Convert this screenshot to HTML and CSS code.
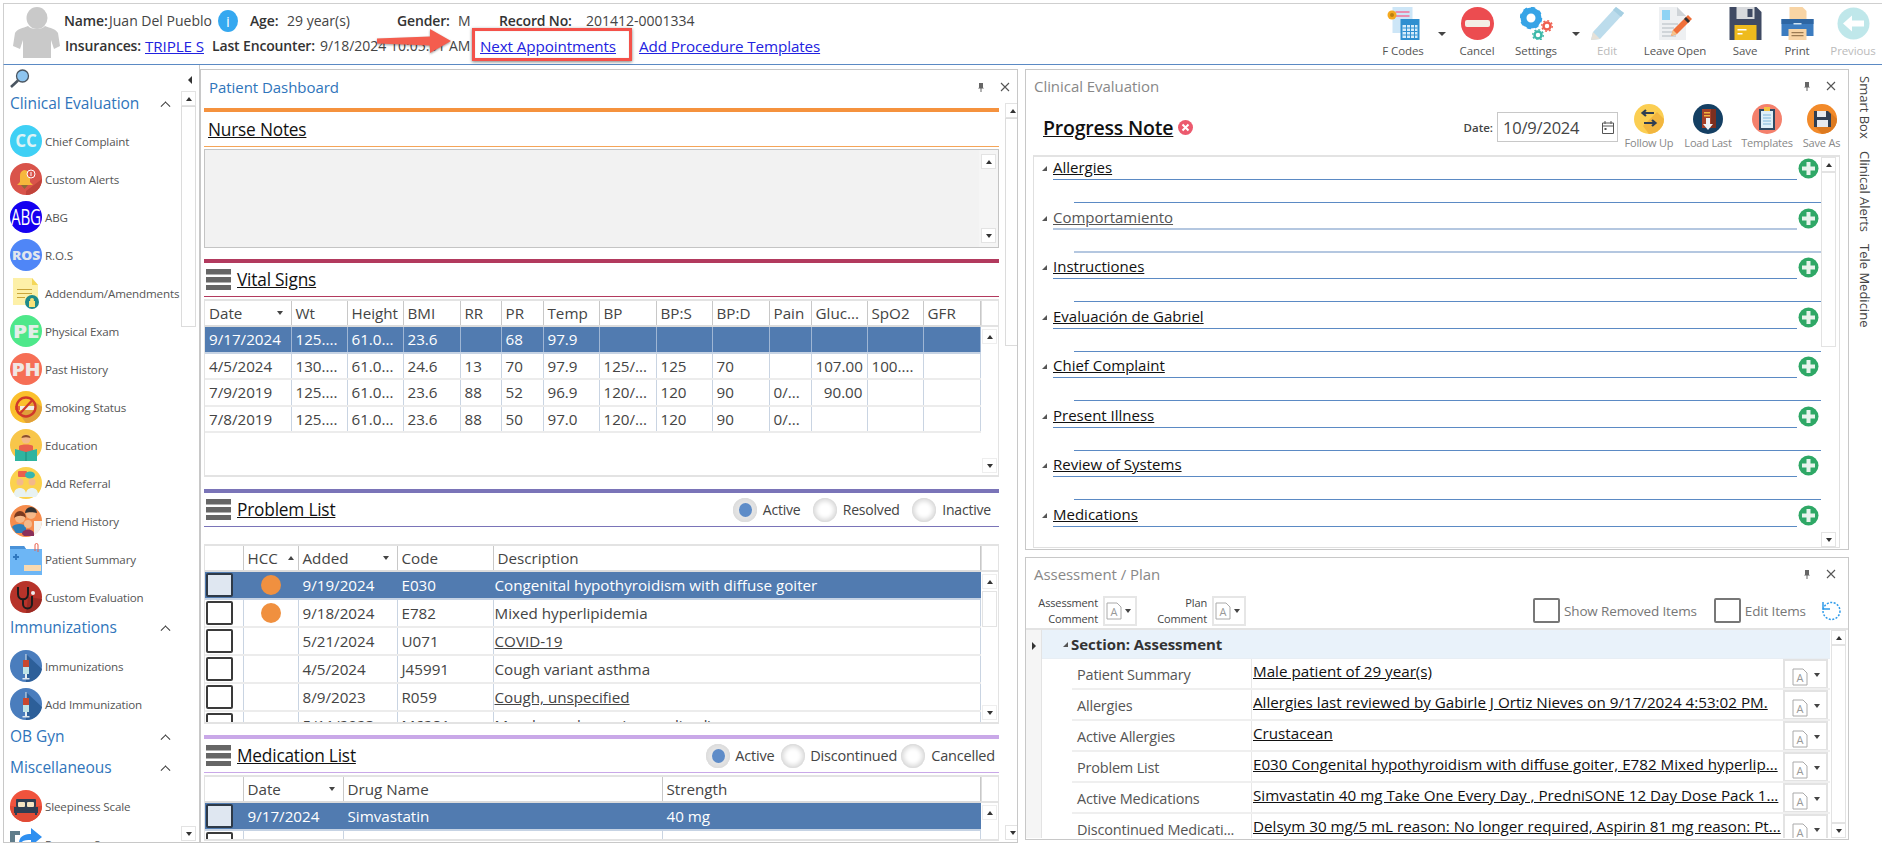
FILE: index.html
```html
<!DOCTYPE html>
<html lang="en">
<head>
<meta charset="utf-8">
<title>Patient Dashboard</title>
<link rel="stylesheet" href="styles.css">
</head>
<body>
<svg class="defs" aria-hidden="true">
  <symbol id="i-pin" viewBox="0 0 10 10"><path d="M3 1h4v4.500l1 1H5.500V10h-1V6.500H2l1-1z" fill="#666"/></symbol>
  <symbol id="i-x" viewBox="0 0 10 10"><path d="M1 1l8 8M9 1l-8 8" stroke="#555" stroke-width="1.100" fill="none"/></symbol>
  <symbol id="i-menu" viewBox="0 0 25 21"><path d="M0 0h25v5.500H0zM0 8h25v5.500H0zM0 16h25v5H0z" fill="#666"/></symbol>
  <symbol id="i-plus" viewBox="0 0 21 21"><circle cx="10.500" cy="10.500" r="10" fill="#2fa866"/><path d="M8.500 4h4v4.500H17v4h-4.500V17h-4v-4.500H4v-4h4.500z" fill="#e8f4ec"/></symbol>
  <symbol id="i-doca" viewBox="0 0 16 18"><path d="M1 1h10l4 4v12H1z" fill="#fff" stroke="#aaa"/><text x="8" y="14" font-size="11" text-anchor="middle" fill="#999" font-family="Liberation Serif">A</text></symbol>
  <symbol id="i-syringe" viewBox="0 0 32 32"><circle cx="16" cy="16" r="16" fill="#4a7dbd"/><path d="M16 4l16 15a16 16 0 0 1-16 13z" fill="#2d5f99"/><path d="M15.500 4h1v6h-1z" fill="#dfe7ee"/><rect x="13" y="10" width="6" height="7" fill="#c8472f"/><rect x="13" y="17" width="6" height="7" fill="#bfe3e6"/><path d="M15 24h2v4h-2z" fill="#e8eef2"/><path d="M12.500 28h7v1.500h-7z" fill="#dfe7ee"/></symbol>
</svg>

<div class="app">
  <header class="top">
    <svg class="avatar" viewBox="0 0 47 51"><ellipse cx="24" cy="11" rx="10.500" ry="11" fill="#c9c9c9"/><path d="M15 19c-5 2-11 3-13 7L0 39l7 3 3-9v18h28V33l3 9 6-3-2-13c-2-4-8-5-13-7-3 4-14 4-17 0z" fill="#c9c9c9"/></svg>
    <div class="hinfo">
      <div class="hrow hrow-1">
        <span class="hl">Name:</span><span>Juan Del Pueblo</span>
        <span class="info-wrap"><span class="info">i</span></span>
        <span class="hl">Age:</span><span>29 year(s)</span>
        <span class="hl">Gender:</span><span>M</span>
        <span class="hl">Record No:</span><span>201412-0001334</span>
      </div>
      <div class="hrow hrow-2">
        <span class="hl">Insurances:</span><a class="lnk" href="#">TRIPLE S</a>
        <span class="hl">Last Encounter:</span><span>9/18/2024 10:05:01 AM</span>
        <a class="lnk" href="#">Next Appointments</a><a class="lnk" href="#">Add Procedure Templates</a>
      </div>
    </div>
    <svg class="callout-arrow" viewBox="0 0 74 24"><path d="M0 9.500l53-2V0l21 12-21 12v-7.500l-53-2z" fill="#f45d4e"/></svg>
    <div class="callout-box"></div>

    <nav class="toolbar">
      <div class="tb tb-fcodes">
        <svg viewBox="0 0 32 33"><rect x="5" y="0" width="20" height="26" fill="#cde6f7"/><path d="M8 4h14v2H8zM8 8h14v2H8z" fill="#e88fb0"/><rect x="13" y="12" width="19" height="21" fill="#2f8fd0"/><path d="M15 18h15v13H15z" fill="#d5ecfa"/><path d="M15 21h15M15 24.500h15M15 28h15M19 18v13M23 18v13M27 18v13" stroke="#2f8fd0" stroke-width="1"/><circle cx="4.500" cy="8" r="4.500" fill="#f4a91f"/><circle cx="4.500" cy="8" r="2" fill="#b97f10"/></svg>
        <span>F Codes</span>
      </div>
      <span class="drop"></span>
      <div class="tb tb-cancel">
        <svg viewBox="0 0 33 33"><circle cx="16.500" cy="16.500" r="16.500" fill="#ec4c50"/><rect x="4" y="13" width="25" height="7" rx="2" fill="#f3efe6"/></svg>
        <span>Cancel</span>
      </div>
      <div class="tb tb-settings">
        <svg viewBox="0 0 33 33"><circle cx="11" cy="11" r="7.500" fill="none" stroke="#37a4e6" stroke-width="6"/><circle cx="11" cy="11" r="10" fill="none" stroke="#37a4e6" stroke-width="2.500" stroke-dasharray="4 3.800"/><circle cx="27" cy="19" r="3.500" fill="none" stroke="#ee5f50" stroke-width="2.500"/><circle cx="27" cy="19" r="5.300" fill="none" stroke="#ee5f50" stroke-width="1.300" stroke-dasharray="2 2.100"/><circle cx="18" cy="28" r="3.500" fill="none" stroke="#3cb8a8" stroke-width="2.500"/><circle cx="18" cy="28" r="5.300" fill="none" stroke="#3cb8a8" stroke-width="1.300" stroke-dasharray="2 2.100"/></svg>
        <span>Settings</span>
      </div>
      <span class="drop drop-2"></span>
      <div class="tb tb-edit tb-off">
        <svg viewBox="0 0 33 33"><path d="M25 0l8 6L9 32 0 33l2-8z" fill="#bcdcec"/><path d="M25 0l8 6-3 4-8-7z" fill="#a6cfe2"/><path d="M2 25l7 7-9 1z" fill="#e6e1d8"/></svg>
        <span>Edit</span>
      </div>
      <div class="tb tb-leave">
        <svg viewBox="0 0 33 33"><path d="M0 0h18l9 9v24H0z" fill="#eef0f2"/><path d="M18 0l9 9h-9z" fill="#cfd4d8"/><rect x="3" y="3" width="8" height="10" fill="#8fd3f4"/><path d="M3 17h16M3 21h12M3 25h10M3 29h14" stroke="#c6ccd1" stroke-width="1.500"/><path d="M29 8l4 4-15 15-6 2 2-6z" fill="#f0703a"/><path d="M27 10l4 4-2 2-4-4z" fill="#333"/><path d="M12 29l2-6 4 4z" fill="#f5c48c"/></svg>
        <span>Leave Open</span>
      </div>
      <div class="tb tb-save">
        <svg viewBox="0 0 32 33"><path d="M0 0h27l5 5v28H0z" fill="#3f4a63"/><path d="M7 0h18v12H7z" fill="#d8dadd"/><rect x="18" y="2" width="5" height="8" fill="#3f4a63"/><rect x="5" y="18" width="22" height="15" fill="#eebb1e"/><path d="M8 22h9v1.500H8zM8 26h5v1.500H8z" fill="#fff"/></svg>
        <span>Save</span>
      </div>
      <div class="tb tb-print">
        <svg viewBox="0 0 32 33"><path d="M8 0h13l4 4v10H8z" fill="#f8d4a4"/><path d="M0 12h32v17H0z" fill="#3c7cc0"/><path d="M0 12h32v5H0z" fill="#2e66a3"/><path d="M12 16h8v1.500h-8z" fill="#cfe4f5"/><path d="M7 22h18v11H7z" fill="#f8d4a4"/><path d="M10 25h12v1.300H10zM10 28h12v1.300H10z" fill="#9a7a52"/></svg>
        <span>Print</span>
      </div>
      <div class="tb tb-prev tb-off">
        <svg viewBox="0 0 33 33"><circle cx="16.500" cy="16.500" r="16" fill="#bfe7ea"/><path d="M6 16.500l9-8v5h12v6H15v5z" fill="#fff"/></svg>
        <span>Previous</span>
      </div>
    </nav>
  </header>

  <main class="main">
    <aside class="side">
      <svg class="search" viewBox="0 0 20 20"><circle cx="12.500" cy="7" r="6" fill="#8ec5f0" stroke="#4a5560" stroke-width="1.300"/><path d="M8 11.500L1 18" stroke="#4a5560" stroke-width="2.600"/></svg>
      <span class="tri-left"></span>
      <div class="sb sb-side"><span class="sb-btn up"></span><span class="sb-fill"></span></div>
      <span class="sb-btn down sb-side-down"></span>

      <div class="nav-h nav-first"><span>Clinical Evaluation</span><i class="chev"></i></div>
      <div class="nav-i"><svg viewBox="0 0 32 32"><circle cx="16" cy="16" r="16" fill="#3fd0f5"/><text x="16" y="22" font-size="17" font-weight="700" text-anchor="middle" fill="#dff3f5">CC</text></svg><span>Chief Complaint</span></div>
      <div class="nav-i"><svg viewBox="0 0 32 32"><circle cx="16" cy="16" r="16" fill="#d9534a"/><path d="M16 28L32 16a16 16 0 0 1-16 16z" fill="#c0433b"/><path d="M14 7a6 6 0 0 1 6 6v6l3 3H7l3-3v-6a6 6 0 0 1 4-6z" fill="#f6b73c"/><path d="M11 22h7l-3.500 4z" fill="#8a6a38"/><circle cx="21" cy="11" r="4" fill="#d9534a" stroke="#fff"/><path d="M21 9v4" stroke="#fff"/></svg><span>Custom Alerts</span></div>
      <div class="nav-i"><svg viewBox="0 0 32 32"><circle cx="16" cy="16" r="16" fill="#1400f0"/><text transform="translate(16 24) scale(1.050 1.450)" font-size="14.500" text-anchor="middle" fill="#fff">ABG</text></svg><span>ABG</span></div>
      <div class="nav-i"><svg viewBox="0 0 32 32"><circle cx="16" cy="16" r="16" fill="#4f86f7"/><text x="16" y="21" font-size="13" font-weight="800" textLength="28" lengthAdjust="spacingAndGlyphs" text-anchor="middle" fill="#e0e6ee">ROS</text></svg><span>R.O.S</span></div>
      <div class="nav-i"><svg viewBox="0 0 32 32"><path d="M3 1h19l6 7v20H3z" fill="#fdf0a8"/><path d="M22 1l6 7h-6z" fill="#f4d75a"/><path d="M7 12h15v1H7zM7 16h15v1H7zM7 20h8v1H7z" fill="#c9a53a"/><circle cx="22" cy="25" r="7" fill="#1f8a8a"/><rect x="19" y="24" width="6" height="6" fill="#f8e27a"/><circle cx="22" cy="23" r="2" fill="#f8e27a"/></svg><span>Addendum/Amendments</span></div>
      <div class="nav-i"><svg viewBox="0 0 32 32"><circle cx="16" cy="16" r="16" fill="#4ee88a"/><text x="16" y="22.500" font-size="18" font-weight="800" text-anchor="middle" textLength="26" lengthAdjust="spacingAndGlyphs" fill="#e3eee8">PE</text></svg><span>Physical Exam</span></div>
      <div class="nav-i"><svg viewBox="0 0 32 32"><circle cx="16" cy="16" r="16" fill="#f66e55"/><text x="16" y="22.500" font-size="18" font-weight="800" text-anchor="middle" textLength="29" lengthAdjust="spacingAndGlyphs" fill="#f0e6e3">PH</text></svg><span>Past History</span></div>
      <div class="nav-i"><svg viewBox="0 0 32 32"><circle cx="16" cy="16" r="16" fill="#fbc02d"/><path d="M16 32a16 16 0 0 0 16-16l-8-6-14 14z" fill="#e0a03a"/><path d="M5 15h20v4H5z" fill="#f3efe6"/><path d="M5 15h5v4H5z" fill="#e86a2f"/><circle cx="16" cy="16" r="9.500" fill="none" stroke="#d0392b" stroke-width="2.400"/><path d="M9.500 23l13-14" stroke="#d0392b" stroke-width="2.400"/></svg><span>Smoking Status</span></div>
      <div class="nav-i"><svg viewBox="0 0 32 32"><circle cx="16" cy="16" r="16" fill="#f8c64a"/><circle cx="16" cy="10" r="4.500" fill="#f4b98a"/><path d="M11.500 9c0-4 9-4 9 0-3-1-6-1-9 0z" fill="#8a4f2a"/><path d="M9 17c2-2 12-2 14 0v6H9z" fill="#e9604c"/><path d="M5 20l11 3 11-3v12H5z" fill="#2fb4a0"/><path d="M15.500 23h1v9h-1z" fill="#1f8a7a"/></svg><span>Education</span></div>
      <div class="nav-i"><svg viewBox="0 0 32 32"><circle cx="16" cy="16" r="16" fill="#fbd24e"/><rect x="8" y="4" width="9" height="6" rx="1" fill="#e9604c"/><ellipse cx="20" cy="8" rx="5" ry="3.500" fill="#35b6b0"/><circle cx="10" cy="15" r="3.500" fill="#f4b98a"/><circle cx="22" cy="15" r="3.500" fill="#f4b98a"/><path d="M4 27c0-8 12-8 12 0v3H6zM16 27c0-8 12-8 12 0l-2 3H16z" fill="#e8f2f2"/></svg><span>Add Referral</span></div>
      <div class="nav-i"><svg viewBox="0 0 32 32"><circle cx="16" cy="16" r="16" fill="#f58c4c"/><path d="M32 16a16 16 0 0 1-8 14V16z" fill="#f3f0ea"/><circle cx="10" cy="13" r="5" fill="#f4b98a"/><path d="M4 13a6 7 0 0 1 12 0c-3-3-8-3-12 0z" fill="#7a3a1f"/><path d="M2 22c2-4 13-4 14 0v6H6z" fill="#2f7fb8"/><circle cx="21" cy="9" r="5" fill="#f4b98a"/><path d="M15 8a6 6 0 0 1 12 0c-3-1-9-1-12 0z" fill="#333"/><circle cx="18" cy="19" r="4" fill="#f4b98a"/><path d="M12 29c0-6 12-6 12 0v2H14z" fill="#8a2f5a"/></svg><span>Friend History</span></div>
      <div class="nav-i"><svg viewBox="0 0 32 32"><path d="M0 3h14l2 3h16v26H0z" fill="#6db6f5"/><path d="M0 3h14l2 3H0z" fill="#4a92d8"/><path d="M5 11h2v2h2v2H7v2H5v-2H3v-2h2z" fill="#2f78c0"/><rect x="14" y="22" width="17" height="6" fill="#f8d9b0"/><path d="M25 8V2a1.500 1.500 0 0 1 3 0v7" fill="none" stroke="#e9604c"/></svg><span>Patient Summary</span></div>
      <div class="nav-i"><svg viewBox="0 0 32 32"><circle cx="16" cy="16" r="16" fill="#b7332a"/><path d="M18 16l14 2a16 16 0 0 1-16 14z" fill="#9c2a23"/><path d="M8 6v7c0 7 10 7 10 0V6M13 18v5c0 6 9 6 9 0v-8" fill="none" stroke="#1c1c1c" stroke-width="2"/><circle cx="23" cy="12" r="2" fill="#eee"/></svg><span>Custom Evaluation</span></div>

      <div class="nav-h"><span>Immunizations</span><i class="chev"></i></div>
      <div class="nav-i"><svg viewBox="0 0 32 32"><use href="#i-syringe"/></svg><span>Immunizations</span></div>
      <div class="nav-i"><svg viewBox="0 0 32 32"><use href="#i-syringe"/></svg><span>Add Immunization</span></div>

      <div class="nav-h nav-ob"><span>OB Gyn</span><i class="chev"></i></div>
      <div class="nav-h"><span>Miscellaneous</span><i class="chev"></i></div>
      <div class="nav-i"><svg viewBox="0 0 32 32"><circle cx="16" cy="16" r="16" fill="#f0533d"/><path d="M0 16h32a16 16 0 0 1-32 0z" fill="#e04a35"/><rect x="6" y="9" width="20" height="8" rx="1" fill="#2f3e52"/><rect x="8" y="12" width="7" height="5" rx="1" fill="#f3e3c2"/><rect x="17" y="12" width="7" height="5" rx="1" fill="#f3e3c2"/><rect x="4" y="17" width="24" height="6" fill="#2f3e52"/><path d="M5 23h2v2H5zM25 23h2v2h-2z" fill="#2f3e52"/></svg><span>Sleepiness Scale</span></div>
      <div class="nav-i"><svg viewBox="0 0 32 32"><path d="M0 3h10v4H5v8H0z" fill="#607d8b"/><path d="M9 14c1-7 7-8 12-8V0l11 9-11 9v-6c-5 0-9 0-12 5z" fill="#2e8ff0"/></svg><span>Progress Summary</span></div>
    </aside>

    <section class="dash">
      <div class="ptitle ptitle-active"><span>Patient Dashboard</span><span class="pbtns"><svg><use href="#i-pin"/></svg><svg><use href="#i-x"/></svg></span></div>
      <div class="sb sb-dash"><span class="sb-btn up"></span><span class="sb-fill"></span></div>
      <span class="sb-btn down sb-dash-down"></span>
      <div class="dash-body">
        <div class="sec sec-orange">
          <div class="sec-head"><h2>Nurse Notes</h2></div>
        </div>
        <div class="notes">
          <div class="sb sb-notes"><span class="sb-btn up"></span><span class="sb-space"></span><span class="sb-btn down"></span></div>
        </div>

        <div class="sec sec-red">
          <div class="sec-head"><svg class="menu"><use href="#i-menu"/></svg><h2>Vital Signs</h2></div>
        </div>
        <div class="grid grid-vitals">
          <table class="tbl t-vitals">
            <colgroup><col class="c86"><col class="c56"><col class="c56"><col class="c57"><col class="c41"><col class="c42"><col class="c56"><col class="c57"><col class="c56"><col class="c57"><col class="c42"><col class="c56"><col class="c56"><col class="c57"></colgroup>
            <thead><tr><th>Date<i class="sort"></i></th><th>Wt</th><th>Height</th><th>BMI</th><th>RR</th><th>PR</th><th>Temp</th><th>BP</th><th>BP:S</th><th>BP:D</th><th>Pain</th><th>Gluc...</th><th>SpO2</th><th>GFR</th></tr></thead>
            <tbody>
              <tr class="sel"><td>9/17/2024</td><td>125....</td><td>61.0...</td><td>23.6</td><td></td><td>68</td><td>97.9</td><td></td><td></td><td></td><td></td><td></td><td></td><td></td></tr>
              <tr><td>4/5/2024</td><td>130....</td><td>61.0...</td><td>24.6</td><td>13</td><td>70</td><td>97.9</td><td>125/...</td><td>125</td><td>70</td><td></td><td class="num">107.00</td><td>100....</td><td></td></tr>
              <tr><td>7/9/2019</td><td>125....</td><td>61.0...</td><td>23.6</td><td>88</td><td>52</td><td>96.9</td><td>120/...</td><td>120</td><td>90</td><td>0/...</td><td class="num">90.00</td><td></td><td></td></tr>
              <tr><td>7/8/2019</td><td>125....</td><td>61.0...</td><td>23.6</td><td>88</td><td>50</td><td>97.0</td><td>120/...</td><td>120</td><td>90</td><td>0/...</td><td></td><td></td><td></td></tr>
            </tbody>
          </table>
          <div class="sb sb-grid"><span class="sb-corner"></span><span class="sb-btn up"></span><span class="sb-space"></span><span class="sb-btn down"></span></div>
        </div>

        <div class="sec sec-purple">
          <div class="sec-head"><svg class="menu"><use href="#i-menu"/></svg><h2>Problem List</h2>
            <div class="radios radios-prob"><span class="radio on"></span><label>Active</label><span class="radio"></span><label>Resolved</label><span class="radio"></span><label>Inactive</label></div>
          </div>
        </div>
        <div class="grid grid-prob">
          <table class="tbl t-prob">
            <colgroup><col class="c38"><col class="c55"><col class="c99"><col class="c96"><col class="c487"></colgroup>
            <thead><tr><th></th><th>HCC<i class="sort sort-up"></i></th><th>Added<i class="sort"></i></th><th>Code</th><th>Description</th></tr></thead>
            <tbody>
              <tr class="sel"><td class="ck"><span class="box"></span></td><td class="dotc"><span class="dot"></span></td><td>9/19/2024</td><td>E030</td><td class="d0">Congenital hypothyroidism with diffuse goiter</td></tr>
              <tr><td class="ck"><span class="box"></span></td><td class="dotc"><span class="dot"></span></td><td>9/18/2024</td><td>E782</td><td class="d0">Mixed hyperlipidemia</td></tr>
              <tr><td class="ck"><span class="box"></span></td><td></td><td>5/21/2024</td><td>U071</td><td class="d0 u">COVID-19</td></tr>
              <tr><td class="ck"><span class="box"></span></td><td></td><td>4/5/2024</td><td>J45991</td><td class="d0">Cough variant asthma</td></tr>
              <tr><td class="ck"><span class="box"></span></td><td></td><td>8/9/2023</td><td>R059</td><td class="d0 u">Cough, unspecified</td></tr>
              <tr><td class="ck"><span class="box"></span></td><td></td><td>5/11/2023</td><td>M6281</td><td class="d0">Muscle weakness (generalized)</td></tr>
            </tbody>
          </table>
          <div class="sb sb-grid"><span class="sb-corner"></span><span class="sb-btn up"></span><span class="sb-thumb sb-thumb-prob"></span><span class="sb-space"></span><span class="sb-btn down"></span></div>
        </div>

        <div class="sec sec-lilac">
          <div class="sec-head"><svg class="menu"><use href="#i-menu"/></svg><h2>Medication List</h2>
            <div class="radios radios-med"><span class="radio on"></span><label>Active</label><span class="radio"></span><label>Discontinued</label><span class="radio"></span><label>Cancelled</label></div>
          </div>
        </div>
        <div class="grid grid-med">
          <table class="tbl t-med">
            <colgroup><col class="c38"><col class="c100"><col class="c319"><col class="c318"></colgroup>
            <thead><tr><th></th><th>Date<i class="sort"></i></th><th>Drug Name</th><th>Strength</th></tr></thead>
            <tbody>
              <tr class="sel"><td class="ck"><span class="box"></span></td><td>9/17/2024</td><td>Simvastatin</td><td>40 mg</td></tr>
              <tr><td class="ck"><span class="box"></span></td><td>4/5/2024</td><td>Insulin Glargine (Prefilled Pen)</td><td>for 100 units/mL</td></tr>
            </tbody>
          </table>
          <div class="sb sb-grid"><span class="sb-corner"></span><span class="sb-btn up"></span><span class="sb-space"></span></div>
        </div>
      </div>
    </section>

    <div class="right">
      <section class="panel panel-ce">
        <div class="ptitle"><span>Clinical Evaluation</span><span class="pbtns"><svg><use href="#i-pin"/></svg><svg><use href="#i-x"/></svg></span></div>
        <div class="pn-row">
          <h1 class="pn-title">Progress Note</h1>
          <svg class="pn-x" viewBox="0 0 15 15"><circle cx="7.500" cy="7.500" r="7.500" fill="#ec5a6e"/><path d="M4.500 4.500l6 6M10.500 4.500l-6 6" stroke="#fff" stroke-width="2"/></svg>
          <span class="date-l">Date:</span>
          <div class="date-box"><span>10/9/2024</span><svg viewBox="0 0 12 13"><path d="M.5 2h11v10.500H.5zM.5 5h11M3 0v3M9 0v3" fill="none" stroke="#555"/><rect x="2.500" y="7" width="2" height="2" fill="#555"/></svg></div>
          <div class="pn-act pa-1"><svg viewBox="0 0 30 30"><circle cx="15" cy="15" r="15" fill="#fbce52"/><path d="M15 30a15 15 0 0 0 15-15l-7-7-14 14z" fill="#f2b63f"/><path d="M20 9H9m3-3L8.500 9 12 12M10 19h11m-3-3 3.500 3-3.500 3" fill="none" stroke="#2f3e52" stroke-width="2.200"/></svg><span>Follow Up</span></div>
          <div class="pn-act pa-2"><svg viewBox="0 0 30 30"><circle cx="15" cy="15" r="15" fill="#143f63"/><path d="M9 5h14v19H9z" fill="#a4402a"/><path d="M18 5h5v19h-5z" fill="#7c2f1f"/><path d="M11 8h6v1.500h-6zM11 11h6v1.500h-6z" fill="#f2b63f"/><path d="M13 14h4v6h3l-5 6-5-6h3z" fill="#eef3f7"/></svg><span>Load Last</span></div>
          <div class="pn-act pa-3"><svg viewBox="0 0 30 30"><circle cx="15" cy="15" r="15" fill="#f4806c"/><rect x="7" y="5" width="16" height="21" fill="#2f4a63"/><rect x="9" y="7" width="12" height="17" fill="#dff0f8"/><path d="M11 11h8M11 14h8M11 17h8M11 20h8" stroke="#7fb8da"/><rect x="12" y="3" width="6" height="4" fill="#f2c23f"/></svg><span>Templates</span></div>
          <div class="pn-act pa-4"><svg viewBox="0 0 30 30"><circle cx="15" cy="15" r="15" fill="#f28a2a"/><path d="M30 15a15 15 0 0 1-15 15l-8-8L22 7z" fill="#dd7a20"/><path d="M7 7h14l3 3v13H7z" fill="#2f3e52"/><rect x="10" y="7" width="9" height="6" fill="#e6e9ee"/><rect x="10" y="16" width="11" height="7" fill="#e6e9ee"/></svg><span>Save As</span></div>
        </div>
        <div class="tree">
          <div class="tree-body">
            <div class="tr"><div class="tr-head"><i class="tr-tri"></i><h3 class="tr-title">Allergies</h3><svg class="plus"><use href="#i-plus"/></svg></div><div class="tr-line"></div></div>
            <div class="tr tr-hover"><div class="tr-head"><i class="tr-tri"></i><h3 class="tr-title">Comportamiento</h3><svg class="plus"><use href="#i-plus"/></svg></div><div class="tr-line"></div></div>
            <div class="tr"><div class="tr-head"><i class="tr-tri"></i><h3 class="tr-title">Instructiones</h3><svg class="plus"><use href="#i-plus"/></svg></div><div class="tr-line"></div></div>
            <div class="tr"><div class="tr-head"><i class="tr-tri"></i><h3 class="tr-title">Evaluación de Gabriel</h3><svg class="plus"><use href="#i-plus"/></svg></div><div class="tr-line"></div></div>
            <div class="tr"><div class="tr-head"><i class="tr-tri"></i><h3 class="tr-title">Chief Complaint</h3><svg class="plus"><use href="#i-plus"/></svg></div><div class="tr-line"></div></div>
            <div class="tr"><div class="tr-head"><i class="tr-tri"></i><h3 class="tr-title">Present Illness</h3><svg class="plus"><use href="#i-plus"/></svg></div><div class="tr-line"></div></div>
            <div class="tr"><div class="tr-head"><i class="tr-tri"></i><h3 class="tr-title">Review of Systems</h3><svg class="plus"><use href="#i-plus"/></svg></div><div class="tr-line"></div></div>
            <div class="tr"><div class="tr-head"><i class="tr-tri"></i><h3 class="tr-title">Medications</h3><svg class="plus"><use href="#i-plus"/></svg></div><div class="tr-line"></div></div>
          </div>
          <div class="sb sb-tree"><span class="sb-btn up"></span><span class="sb-thumb sb-thumb-tree"></span><span class="sb-space"></span><span class="sb-btn down"></span></div>
        </div>
      </section>

      <section class="panel panel-ap">
        <div class="ptitle ptitle-ap"><span>Assessment / Plan</span><span class="pbtns"><svg><use href="#i-pin"/></svg><svg><use href="#i-x"/></svg></span></div>
        <div class="ap-tools">
          <div class="ap-cmt ap-cmt-1">Assessment<br>Comment</div><div class="ap-drop"><svg><use href="#i-doca"/></svg><i class="sort sort-dark"></i></div>
          <div class="ap-cmt ap-cmt-2">Plan<br>Comment</div><div class="ap-drop"><svg><use href="#i-doca"/></svg><i class="sort sort-dark"></i></div>
          <span class="check check-1"></span><label class="chk-l">Show Removed Items</label>
          <span class="check check-2"></span><label class="chk-l">Edit Items</label>
          <svg class="refresh" viewBox="0 0 21 21"><circle cx="10.500" cy="11" r="8.500" fill="none" stroke="#2f9bea" stroke-width="1.500" stroke-dasharray="2 1.500"/><path d="M2 2v7h7" fill="none" stroke="#2f9bea" stroke-width="1.500"/></svg>
        </div>
        <div class="ap-grid">
          <div class="ap-gutter"><i class="ap-arrow"></i></div>
          <div class="ap-body">
            <div class="ap-section"><i class="tr-tri"></i><span>Section: Assessment</span></div>
            <div class="ap-row"><span class="ap-label">Patient Summary</span><a class="ap-val" href="#">Male patient of 29 year(s)</a><div class="ap-btn"><svg><use href="#i-doca"/></svg><i class="sort sort-dark"></i></div></div>
            <div class="ap-row"><span class="ap-label">Allergies</span><a class="ap-val" href="#">Allergies last reviewed by Gabirle J Ortiz Nieves on 9/17/2024 4:53:02 PM.</a><div class="ap-btn"><svg><use href="#i-doca"/></svg><i class="sort sort-dark"></i></div></div>
            <div class="ap-row"><span class="ap-label">Active Allergies</span><a class="ap-val" href="#">Crustacean</a><div class="ap-btn"><svg><use href="#i-doca"/></svg><i class="sort sort-dark"></i></div></div>
            <div class="ap-row"><span class="ap-label">Problem List</span><a class="ap-val" href="#">E030 Congenital hypothyroidism with diffuse goiter, E782 Mixed hyperlip...</a><div class="ap-btn"><svg><use href="#i-doca"/></svg><i class="sort sort-dark"></i></div></div>
            <div class="ap-row"><span class="ap-label">Active Medications</span><a class="ap-val" href="#">Simvastatin 40 mg Take One Every Day , PredniSONE 12 Day Dose Pack 1...</a><div class="ap-btn"><svg><use href="#i-doca"/></svg><i class="sort sort-dark"></i></div></div>
            <div class="ap-row"><span class="ap-label">Discontinued Medicati...</span><a class="ap-val" href="#">Delsym 30 mg/5 mL reason: No longer required, Aspirin 81 mg reason: Pt...</a><div class="ap-btn"><svg><use href="#i-doca"/></svg><i class="sort sort-dark"></i></div></div>
          </div>
          <div class="sb sb-ap"><span class="sb-btn up"></span><span class="sb-thumb sb-thumb-ap"></span><span class="sb-btn down"></span></div>
        </div>
      </section>
    </div>

    <div class="rail"><span>Smart Box</span><span>Clinical Alerts</span><span>Tele Medicine</span></div>
  </main>
</div>
</body>
</html>
```

FILE: styles.css
```css
* { box-sizing: border-box; }
html, body { margin: 0; padding: 0; background: #fff; }
body {
  width: 1884px; height: 848px; overflow: hidden;
  font-family: "Open Sans", "Noto Sans", sans-serif;
  color: #444; font-size: 13px;
}
.defs { display: none; }
svg text { font-family: "Open Sans", "Noto Sans", sans-serif; }
.app { display: flex; flex-direction: column; height: 848px; }

/* header */
.top {
  position: relative; display: flex; flex: none;
  height: 62px; margin: 3px 2px 0 3px;
  border-top: 1px solid #cfcfcf; border-left: 1px solid #cfcfcf; border-bottom: 1px solid #5b8ac4;
}
.avatar { width: 47px; height: 51px; margin: 3px 4px 0 9px; flex: none; }
.hinfo { display: flex; flex-direction: column; padding-top: 4px; }
.hrow { display: grid; height: 25px; align-items: center; font-size: 14px; white-space: nowrap; color: #444; }
.hrow-1 { grid-template-columns: 45px 109px 32px 37px 110px 61px 41px 87px auto; }
.hrow-2 { grid-template-columns: 80px 67px 108px 160px 159px auto; margin-left: 1px; }
.hl { font-weight: 600; color: #333; letter-spacing: -.15px; }
.lnk { color: #2222e0; text-decoration: underline; font-size: 15.200px; letter-spacing: -.1px; }
.info-wrap { display: flex; }
.info {
  width: 20px; height: 22px; border-radius: 50%; background: #35a8f0; color: #fff;
  text-align: center; line-height: 22px; font-size: 15px;
}
.callout-arrow { position: absolute; left: 373px; top: 25px; width: 74px; height: 24px; filter: drop-shadow(0 1px 1px rgba(0,0,0,.4)); }
.callout-box {
  position: absolute; left: 468px; top: 24px; width: 160px; height: 33px;
  border: 3px solid #f4524a; box-shadow: 0 1px 3px rgba(0,0,0,.5), inset 0 0 1px rgba(0,0,0,.3);
}
.toolbar { display: flex; margin-left: auto; height: 58px; padding-right: 1px; }
.tb { display: flex; flex-direction: column; align-items: center; padding-top: 3px; font-size: 11.500px; letter-spacing: -.1px; color: #555; white-space: nowrap; }
.tb svg { width: 33px; height: 33px; flex: none; }
.tb span { margin-top: 3px; line-height: 16px; }
.tb-off { color: #bbb; }
.tb-fcodes { width: 56px; }
.tb-cancel { width: 48px; margin-left: 7px; }
.tb-settings { width: 50px; margin-left: 10px; }
.tb-edit { width: 40px; margin-left: 7px; }
.tb-leave { width: 70px; margin-left: 13px; }
.tb-save { width: 50px; margin-left: 10px; }
.tb-print { width: 50px; margin-left: 2px; }
.tb-prev { width: 56px; margin-left: 3px; }
.drop { width: 0; height: 0; margin: 28px 0 0 7px; border: 4px solid transparent; border-top: 4px solid #444; border-bottom: 0; flex: none; }
.drop-2 { margin-left: 11px; }

/* main */
.main { display: flex; flex: 1; min-height: 0; }

/* sidebar */
.side {
  position: relative; flex: none; width: 197px; height: 778px; margin-left: 3px; overflow: hidden;
  border-left: 1px solid #c8c8c8; border-right: 1px solid #c8c8c8; border-bottom: 1px solid #c8c8c8;
}
.search { display: block; width: 20px; height: 20px; margin: 4px 0 3px 6px; }
.tri-left { position: absolute; left: 184px; top: 11px; width: 0; height: 0; border: 4px solid transparent; border-right: 4px solid #333; border-left: 0; }
.nav-h { display: flex; align-items: center; height: 22px; margin-bottom: 9px; padding-left: 6px; font-size: 15.500px; color: #2f75bb; letter-spacing: -.05px; }
.nav-first { margin-bottom: 8px; }
.nav-ob { margin-top: 2px; }
.chev { position: absolute; left: 158px; width: 7px; height: 7px; border-left: 1.500px solid #333; border-top: 1.500px solid #333; transform: rotate(45deg) translate(2px, 2px); }
.nav-i { display: flex; align-items: center; gap: 3px; height: 38px; padding-left: 6px; font-size: 11.600px; letter-spacing: -.15px; color: #555; white-space: nowrap; }
.nav-i svg { width: 32px; height: 32px; flex: none; }

/* scrollbars */
.sb { display: flex; flex-direction: column; align-items: center; flex: none; }
.sb-btn { display: flex; align-items: center; justify-content: center; flex: none; width: 15px; height: 15px; background: #fff; border: 1px solid #e3e3e3; }
.sb-btn::after { content: ""; width: 0; height: 0; border: 3.500px solid transparent; }
.sb-btn.up::after { border-bottom: 4px solid #333; border-top: 0; }
.sb-btn.down::after { border-top: 4px solid #333; border-bottom: 0; }
.sb-fill { flex: 1; width: 15px; background: #fff; border: 1px solid #dcdcdc; }
.sb-space { flex: 1; }
.sb-thumb { width: 15px; background: #fff; border: 1px solid #e3e3e3; flex: none; }
.sb-side { position: absolute; left: 177px; top: 26px; height: 236px; }
.sb-side-down { position: absolute; left: 177px; top: 761px; }
.sb-dash { position: absolute; left: 804px; top: 33px; height: 243px; }
.sb-dash-down { position: absolute; left: 804px; top: 755px; }

/* panels */
.dash {
  position: relative; flex: none; width: 818px; height: 774px; margin-top: 4px;
  border: 1px solid #c8c8c8; overflow: hidden;
}
.ptitle { display: flex; align-items: center; justify-content: space-between; height: 34px; padding: 0 12px 2px 8px; font-size: 15px; letter-spacing: -.05px; color: #888; }
.ptitle-active { height: 38px; padding: 0 7px 5px 8px; color: #2f75bb; }
.pbtns { display: flex; align-items: center; gap: 14px; }
.pbtns svg { width: 10px; height: 10px; }
.dash-body { display: flex; flex-direction: column; width: 795px; margin-left: 3px; }
.sec { border-top: 4px solid; border-bottom: 1.500px solid; }
.sec-orange { border-color: #f5923e; height: 39px; }
.sec-red { border-color: #b23a5e; height: 38px; margin-top: 11px; }
.sec-purple { border-color: #7a74b8; height: 38px; margin-top: 12px; }
.sec-lilac { border-color: #c9a8e8; height: 38px; margin-top: 11px; }
.sec-orange { border-bottom-color: #f5a558; }
.sec-head { display: flex; align-items: center; height: 100%; padding-left: 2px; }
.sec-orange .sec-head { padding-left: 4px; }
.sec-head h2 { margin: 0; font-size: 17.300px; font-weight: 400; letter-spacing: -.2px; color: #111; text-decoration: underline; }
.menu { width: 25px; height: 21px; margin-right: 6px; flex: none; }
.notes { display: flex; justify-content: flex-end; height: 99px; margin-top: 2px; background: #f2f2f2; border: 1px solid #c4c4c4; }
.sb-notes { width: 19px; padding: 4px 0; background: #f5f5f5; }

.radios { display: flex; align-items: center; margin-left: auto; font-size: 14px; letter-spacing: -.2px; color: #444; }
.radio { position: relative; flex: none; width: 24px; height: 24px; border-radius: 50%; background: #fff; box-shadow: inset 0 0 0 1px #ddd, inset 0 0 4px 3px #ddd; }
.radio.on { background: #e8e8e8; }
.radio.on::after { content: ""; position: absolute; left: 6px; top: 5px; width: 13px; height: 14px; border-radius: 50%; background: #5e8cc8; }
.radios label { margin-left: 6px; }
.radios-prob { padding-right: 8px; }
.radios-prob label { width: 50px; }
.radios-prob label:nth-of-type(2) { width: 69.500px; }
.radios-prob label:nth-of-type(3) { width: auto; }
.radios-med { padding-right: 4px; font-size: 14.500px; }
.radios-med label { width: 46px; margin-left: 5px; }
.radios-med label:nth-of-type(2) { width: 91px; }
.radios-med label:nth-of-type(3) { width: auto; margin-left: 6px; }

/* grids */
.grid { display: flex; overflow: hidden; background: #fff; border: 1px solid #e3e3e3; border-top: 2px solid #e3e3e3; border-bottom: 2px solid #e3e3e3; }
.grid-vitals { height: 178px; margin-top: 2px; }
.grid-prob { height: 180px; margin-top: 17px; }
.grid-med { height: 66px; margin-top: 2px; }
.tbl { table-layout: fixed; width: 775px; height: 0; border-collapse: collapse; font-size: 15.200px; color: #444; align-self: flex-start; flex: none; }
.tbl th, .tbl td { padding: 0 0 0 4px; overflow: hidden; white-space: nowrap; text-align: left; font-weight: 400; border-right: 1px solid #c9d4e2; }
.tbl th { position: relative; height: 25px; border-bottom: 2px solid #dcdcdc; border-right: 1px solid #c8c8c8; }
.tbl td { border-bottom: 2px solid #ececec; }
.t-vitals td { height: 26.500px; }
.t-prob td, .t-med td { height: 28px; }
.tbl tr.sel td { background: #517bb0; color: #fff; border-bottom-color: #c6d3e4; border-right-color: #9fb6d4; }
.t-prob tr.sel td, .t-med tr.sel td { border-right-color: #517bb0; }
.tbl td.num { text-align: right; padding-right: 4px; }
.tbl td.d0 { padding-left: 1px; }
.tbl td.u { text-decoration: underline; }
.tbl td.ck { padding: 0 0 0 1px; }
.tbl td.dotc { padding: 0 0 0 17px; }
.box { display: block; width: 27px; height: 24px; border: 2px solid #3a3a3a; border-radius: 2px; background: #fff; }
.sel .box { background: #dfe7f1; border-color: #2e3a48; }
.dot { display: block; width: 20px; height: 20px; border-radius: 50%; background: #f0903f; }
.c38 { width: 38px; } .c41 { width: 41px; } .c42 { width: 42px; } .c55 { width: 55px; }
.c56 { width: 56px; } .c57 { width: 57px; } .c86 { width: 86px; } .c96 { width: 96px; } .c99 { width: 99px; }
.c100 { width: 100px; } .c318 { width: 318px; } .c319 { width: 319px; } .c487 { width: 487px; }
.sort { position: absolute; right: 8px; top: 10px; width: 0; height: 0; border: 3.500px solid transparent; border-top: 4px solid #444; border-bottom: 0; }
.sort-up { right: 4px; border-top: 0; border-bottom: 4px solid #444; }
.sb-grid { width: 18px; }
.sb-corner { width: 100%; height: 26px; flex: none; border-left: 1px solid #ddd; border-bottom: 2px solid #e3e3e3; }
.sb-grid .sb-btn { border-color: #eee; margin: 2px 0; }
.sb-thumb-prob { height: 36px; }

/* right column */
.right { display: flex; flex-direction: column; gap: 7px; flex: none; width: 824px; margin: 4px 0 0 7px; }
.panel { flex: none; border: 1px solid #c8c8c8; overflow: hidden; }
.panel-ce { height: 481px; }
.panel-ap { height: 283px; }
.pn-row { position: relative; display: flex; height: 51px; padding-left: 17px; }
.pn-title { margin: 11px 0 0; font-size: 19.500px; line-height: 26px; height: 29px; font-weight: 600; letter-spacing: -.2px; color: #111; text-decoration: underline; }
.pn-x { width: 15px; height: 15px; margin: 16px 0 0 5px; flex: none; }
.date-l { margin: 16px 0 0 auto; font-size: 11.500px; font-weight: 600; line-height: 16px; color: #444; }
.date-box { display: flex; align-items: center; justify-content: space-between; width: 120.500px; height: 30px; margin: 8px 0 0 4px; padding: 0 3px 0 5px; border: 1px solid #c8c8c8; font-size: 16.500px; letter-spacing: -.2px; }
.date-box svg { width: 12px; height: 13px; }
.pn-act { display: flex; flex-direction: column; align-items: center; width: 60px; font-size: 11px; letter-spacing: -.2px; color: #888; white-space: nowrap; }
.pn-act svg { width: 30px; height: 30px; flex: none; }
.pn-act span { margin-top: 1px; line-height: 16px; }
.pa-1 { margin-left: 1.500px; }
.pa-2 { margin-left: -1px; }
.pa-3 { margin-left: -1px; }
.pa-4 { width: 50px; margin-right: 1.500px; margin-left: -.5px; }

.tree { display: flex; height: 393px; margin: 0 8px 0 7px; border: 1px solid #e0e0e0; border-top: 2px solid #e3e3e3; overflow: hidden; }
.tree-body { flex: 1; min-width: 0; overflow: hidden; }
.tr { height: 49.500px; }
.tr-head { display: flex; align-items: center; height: 23px; padding-left: 8px; }
.tr-tri { width: 0; height: 0; flex: none; border-style: solid; border-width: 0 0 5px 5px; border-color: transparent transparent #555 transparent; }
.tr-title { flex: 1; height: 23px; margin: 0 1px 0 6px; font-size: 15px; line-height: 21px; font-weight: 500; color: #111; text-decoration: underline; border-bottom: 1px solid #5b8ac4; }
.tr-line { height: 23px; margin-left: 40px; border-bottom: 1px solid #5b8ac4; }
.tr-hover .tr-title { color: #555; border-bottom: 2px solid #b4c7e0; }
.tr-hover .tr-line { border-bottom: 2px solid #b4c7e0; }
.plus { width: 21px; height: 21px; flex: none; margin-right: 2px; }
.sb-tree { width: 15px; margin-right: 3px; }
.sb-thumb-tree { height: 175px; }

.ptitle-ap { height: 35px; padding-bottom: 4px; }
.ap-tools { display: flex; align-items: center; height: 35px; padding-left: 8px; font-size: 11px; letter-spacing: -.15px; }
.ap-cmt { text-align: right; line-height: 16px; color: #444; }
.ap-cmt-1 { width: 64px; }
.ap-cmt-2 { width: 70px; margin-left: 0; }
.ap-drop { position: relative; width: 34px; height: 30px; margin-left: 5px; border: 2px solid #e6e6e6; flex: none; }
.ap-drop svg { position: absolute; left: 1px; top: 4px; width: 16px; height: 18px; }
.sort-dark { right: 4px; top: 11px; }
.check { width: 27px; height: 25px; flex: none; border: 2px solid #777; border-radius: 2px; }
.check-1 { margin-left: 287px; }
.check-2 { margin-left: 17px; }
.chk-l { margin-left: 4px; font-size: 13.500px; letter-spacing: -.15px; color: #777; white-space: nowrap; }
.refresh { width: 21px; height: 21px; margin-left: 15px; flex: none; }

.ap-grid { display: flex; height: 210px; border-top: 2px solid #e3e3e3; overflow: hidden; }
.ap-gutter { flex: none; width: 16px; background: #f5f5f5; border-right: 1px solid #e3e3e3; }
.ap-arrow { display: block; width: 0; height: 0; margin: 12px 0 0 6px; border: 4px solid transparent; border-left: 4px solid #333; border-right: 0; }
.ap-body { flex: none; width: 788px; }
.ap-section { display: flex; align-items: center; height: 29px; padding-left: 21px; background: #e9f2fa; font-size: 15px; font-weight: 700; letter-spacing: -.05px; color: #333; border-bottom: 1px solid #e8eef4; }
.ap-section span { margin-left: 3px; }
.ap-row { display: grid; grid-template-columns: 180px 531px 45px; height: 31px; margin-left: 30px; white-space: nowrap; border-bottom: 2px solid #efefef; }
.ap-label { padding: 6px 0 0 5px; line-height: 20px; font-size: 14.500px; letter-spacing: -.2px; color: #555; border-right: 1px solid #e8e8e8; overflow: hidden; }
.ap-val { padding: 2px 0 0 1px; line-height: 20px; font-size: 15.200px; color: #111; overflow: hidden; }
.ap-btn { position: relative; border: 2px solid #e3e3e3; border-bottom-width: 1px; }
.ap-btn svg { position: absolute; left: 7px; top: 7px; width: 16px; height: 18px; }
.ap-btn .sort-dark { right: 6px; top: 12px; }
.sb-ap { width: 15px; margin-left: 1px; }
.sb-thumb-ap { flex: 1; }

/* right rail */
.rail { display: flex; flex: none; width: 24px; height: 300px; padding-top: 11px; gap: 12px; margin-left: 1px; writing-mode: vertical-rl; font-size: 13px; color: #444; white-space: nowrap; }
```
